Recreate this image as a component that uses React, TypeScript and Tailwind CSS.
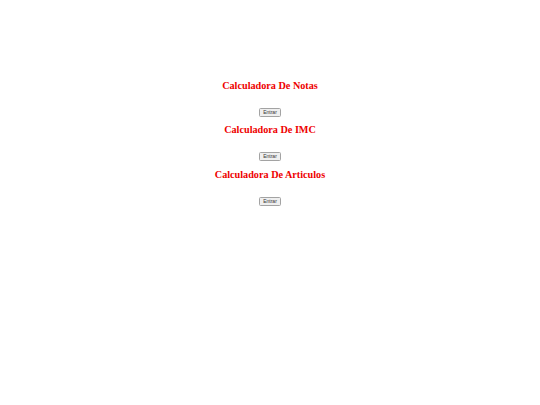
const calculadoras = ['Calculadora De Notas', 'Calculadora De IMC', 'Calculadora De Articulos']

export default function App() {
  return (
    <div className="min-h-[405px] w-full bg-white pt-[79.5px] text-center font-['Liberation_Serif',serif]">
      {calculadoras.map(nombre => (
        <div key={nombre} className="flex flex-col items-center pb-[7.5px]">
          <h2 className="h-[12px] text-[10.2px] leading-[12px] font-bold text-[#ee0000]">{nombre}</h2>
          <button className="mt-[16px] box-border block h-[9px] w-[22px] rounded-[1.5px] border-[0.6px] border-[#a3a3a3] bg-[#efefef] p-0 font-['Liberation_Sans',sans-serif] text-[5px] leading-[7.8px] text-[#333]">
            Entrar
          </button>
        </div>
      ))}
    </div>
  )
}
